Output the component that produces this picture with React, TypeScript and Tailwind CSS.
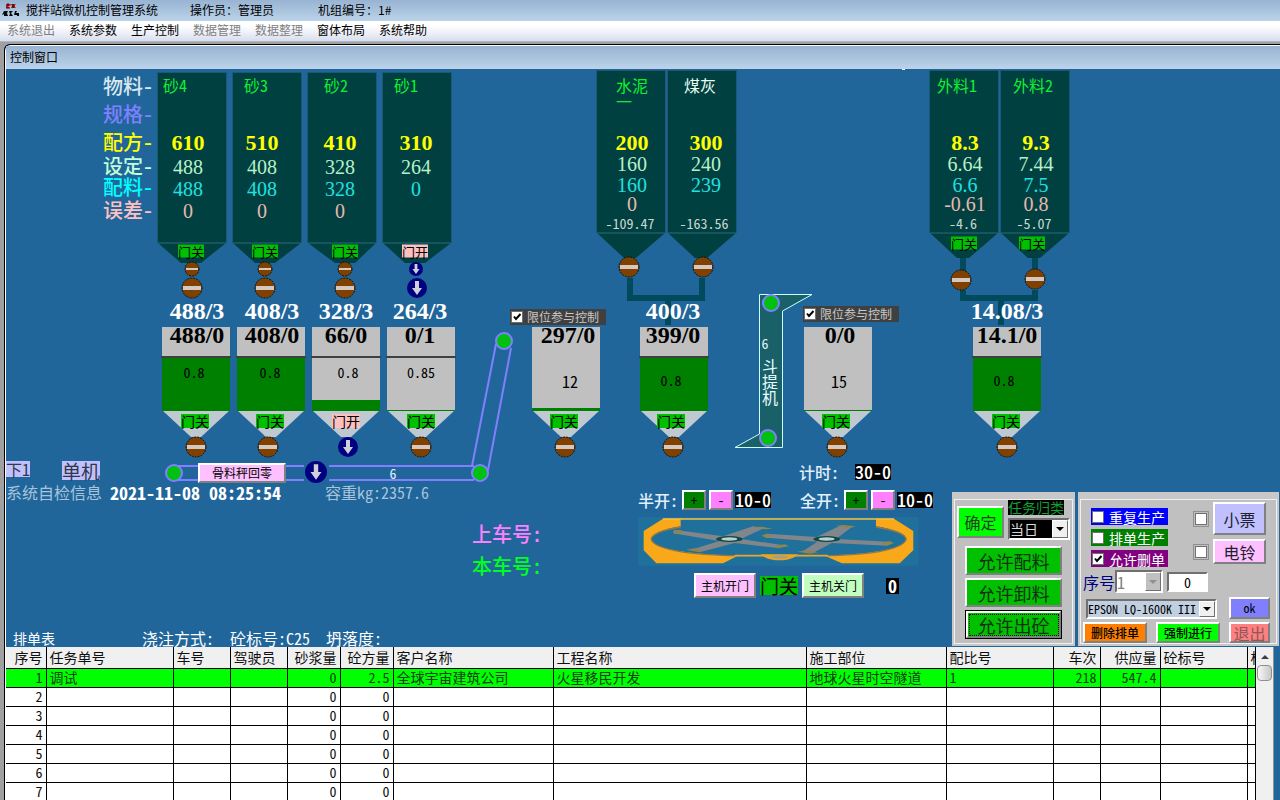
import type { ReactNode } from 'react';
import clsx from 'clsx';

type Gate = 'open' | 'closed';

interface Silo {
  x: number;
  top: number;
  bottom: number;
  textX: number;
  rows: number[];
  name: string;
  nameX: number;
  nameClass: string;
  recipe: string;
  target: string;
  actual: string;
  error?: string;
  stock?: string;
  gate?: Gate;
  gateX?: number;
}

interface Hopper {
  x: number;
  textX: number;
  target?: string;
  actual: string;
  factor: string;
  factorX: number;
  factorY: number;
  factorClass: string;
  level: number;
  marker: boolean;
  gate: Gate;
  gateX: number;
  valveX: number;
}

// The plant drawing uses frame coordinates, the canvas starts inside the frame
const ORIGIN_X = 6;
const ORIGIN_Y = 69;

const SAND_ROWS = [143, 167, 189, 211, 224];
const POWDER_ROWS = [143, 164, 185, 204, 224];

const silos: Silo[] = [
  { x: 158, top: 73, bottom: 243, textX: 188, rows: SAND_ROWS, name: '砂4', nameX: 163, nameClass: 'text-[#10f030]', recipe: '610', target: '488', actual: '488', error: '0', gate: 'closed', gateX: 191 },
  { x: 233, top: 73, bottom: 243, textX: 262, rows: SAND_ROWS, name: '砂3', nameX: 244, nameClass: 'text-[#10f030]', recipe: '510', target: '408', actual: '408', error: '0', gate: 'closed', gateX: 265 },
  { x: 308, top: 73, bottom: 243, textX: 340, rows: SAND_ROWS, name: '砂2', nameX: 324, nameClass: 'text-[#10f030]', recipe: '410', target: '328', actual: '328', error: '0', gate: 'closed', gateX: 345 },
  { x: 383, top: 73, bottom: 243, textX: 416, rows: SAND_ROWS, name: '砂1', nameX: 394, nameClass: 'text-[#10f030]', recipe: '310', target: '264', actual: '0', gate: 'open', gateX: 415 },
  { x: 597, top: 71, bottom: 233, textX: 632, rows: POWDER_ROWS, name: '水泥一', nameX: 616, nameClass: 'text-[#10f030]', recipe: '200', target: '160', actual: '160', error: '0', stock: '-109.47' },
  { x: 668, top: 71, bottom: 233, textX: 706, rows: POWDER_ROWS, name: '煤灰', nameX: 684, nameClass: 'text-[#e8fff0]', recipe: '300', target: '240', actual: '239', stock: '-163.56' },
  { x: 930, top: 71, bottom: 233, textX: 965, rows: POWDER_ROWS, name: '外料1', nameX: 937, nameClass: 'text-[#10f030]', recipe: '8.3', target: '6.64', actual: '6.6', error: '-0.61', stock: '-4.6', gate: 'closed', gateX: 964 },
  { x: 1001, top: 71, bottom: 233, textX: 1036, rows: POWDER_ROWS, name: '外料2', nameX: 1013, nameClass: 'text-[#10f030]', recipe: '9.3', target: '7.44', actual: '7.5', error: '0.8', stock: '-5.07', gate: 'closed', gateX: 1032 },
];

const hoppers: Hopper[] = [
  { x: 162, textX: 197, target: '488/3', actual: '488/0', factor: '0.8', factorX: 194, factorY: 373, factorClass: 'text-sm', level: 358, marker: true, gate: 'closed', gateX: 195, valveX: 196 },
  { x: 237, textX: 272, target: '408/3', actual: '408/0', factor: '0.8', factorX: 270, factorY: 373, factorClass: 'text-sm', level: 358, marker: true, gate: 'closed', gateX: 270, valveX: 268 },
  { x: 312, textX: 346, target: '328/3', actual: '66/0', factor: '0.8', factorX: 348, factorY: 373, factorClass: 'text-sm', level: 400, marker: true, gate: 'open', gateX: 346, valveX: 348 },
  { x: 387, textX: 420, target: '264/3', actual: '0/1', factor: '0.85', factorX: 421, factorY: 373, factorClass: 'text-sm', level: 410, marker: true, gate: 'closed', gateX: 421, valveX: 421 },
  { x: 532, textX: 568, actual: '297/0', factor: '12', factorX: 570, factorY: 382, factorClass: 'text-base', level: 408, marker: false, gate: 'closed', gateX: 564, valveX: 565 },
  { x: 640, textX: 673, target: '400/3', actual: '399/0', factor: '0.8', factorX: 671, factorY: 381, factorClass: 'text-sm', level: 358, marker: true, gate: 'closed', gateX: 671, valveX: 673 },
  { x: 804, textX: 840, actual: '0/0', factor: '15', factorX: 839, factorY: 382, factorClass: 'text-base', level: 410, marker: false, gate: 'closed', gateX: 836, valveX: 837 },
  { x: 973, textX: 1007, target: '14.08/3', actual: '14.1/0', factor: '0.8', factorX: 1004, factorY: 381, factorClass: 'text-sm', level: 358, marker: true, gate: 'closed', gateX: 1006, valveX: 1007 },
];

const rowCaptions = [
  { text: '物料-', y: 87, className: 'text-[#d8e8f0]' },
  { text: '规格-', y: 115, className: 'text-[#8080ff]' },
  { text: '配方-', y: 143, className: 'text-[#ffff00]' },
  { text: '设定-', y: 167, className: 'text-[#c0ffd8]' },
  { text: '配料-', y: 188, className: 'text-[#00ffff]' },
  { text: '误差-', y: 211, className: 'text-[#ffc0c0]' },
];

const menu = [
  { text: '系统退出', disabled: true },
  { text: '系统参数', disabled: false },
  { text: '生产控制', disabled: false },
  { text: '数据管理', disabled: true },
  { text: '数据整理', disabled: true },
  { text: '窗体布局', disabled: false },
  { text: '系统帮助', disabled: false },
];

const columns = [
  { title: '序号', width: 'w-[40px]', right: true },
  { title: '任务单号', width: 'w-[127px]', right: false },
  { title: '车号', width: 'w-[57px]', right: false },
  { title: '驾驶员', width: 'w-[57px]', right: false },
  { title: '砂浆量', width: 'w-[53px]', right: true },
  { title: '砼方量', width: 'w-[53px]', right: true },
  { title: '客户名称', width: 'w-[160px]', right: false },
  { title: '工程名称', width: 'w-[253px]', right: false },
  { title: '施工部位', width: 'w-[140px]', right: false },
  { title: '配比号', width: 'w-[107px]', right: false },
  { title: '车次', width: 'w-[47px]', right: true },
  { title: '供应量', width: 'w-[60px]', right: true },
  { title: '砼标号', width: 'w-[87px]', right: false },
  { title: '标', width: '', right: false },
];

const orders = [
  ['1', '调试', '', '', '0', '2.5', '全球宇宙建筑公司', '火星移民开发', '地球火星时空隧道', '1', '218', '547.4', '', ''],
  ...['2', '3', '4', '5', '6', '7'].map((n) => [n, '', '', '', '0', '0', '', '', '', '', '', '', '', '']),
];

const bevel = 'border-2 border-t-white border-l-white border-r-[#808080] border-b-[#808080]';
const sunken = 'border-2 border-t-[#707070] border-l-[#707070] border-r-white border-b-white';
const serif = "font-['Liberation_Serif',serif]";

function at(x: number, y: number) {
  return { left: x - ORIGIN_X, top: y - ORIGIN_Y };
}

/* Text centred on a point of the drawing */
function Mark({ x, y, className, children }: { x: number; y: number; className?: string; children: ReactNode }) {
  return (
    <span
      style={at(x, y)}
      className={clsx('absolute -translate-x-1/2 -translate-y-1/2 leading-none whitespace-nowrap', className)}
    >
      {children}
    </span>
  );
}

/* Item whose top left corner sits on a point of the drawing */
function Place({ x, y, className, children }: { x: number; y: number; className?: string; children: ReactNode }) {
  return (
    <div style={at(x, y)} className={clsx('absolute whitespace-nowrap', className)}>
      {children}
    </div>
  );
}

function GateTag({ gate, className }: { gate: Gate; className?: string }) {
  return (
    <span className={clsx('block leading-none text-black', gate === 'open' ? 'bg-[#ffc0c0]' : 'bg-[#00c000]', className)}>
      {gate === 'open' ? '门开' : '门关'}
    </span>
  );
}

function Valve({ x, y, r = 10, open = false }: { x: number; y: number; r?: number; open?: boolean }) {
  if (open) {
    const k = r / 10;
    return (
      <g transform={`translate(${x} ${y}) scale(${k})`}>
        <circle r={10} fill="#000080" />
        <path d="M-2 -7h4v7h3l-5 7l-5 -7h3z" fill="#d0d0d8" />
      </g>
    );
  }
  return (
    <g transform={`translate(${x} ${y})`}>
      <circle r={r} fill="#804000" stroke="#101010" strokeDasharray="2 1" />
      <rect x={-r + 1} y={r > 8 ? -2 : -1} width={2 * r - 2} height={r > 8 ? 4 : 2} fill="#d4c8c0" />
    </g>
  );
}

function Pulley({ x, y }: { x: number; y: number }) {
  return <circle cx={x} cy={y} r={8} fill="#00c010" stroke="#8080ff" strokeWidth={2} />;
}

function PlantDrawing() {
  return (
    <svg className="absolute top-0 left-0" width={1274} height={577} viewBox="6 69 1274 577" aria-hidden="true">
      {silos.map((s) => {
        const half = s.bottom === 243 ? 10 : 6;
        const tip = s.bottom + (s.bottom === 243 ? 20 : 25);
        const mid = s.bottom === 243 ? s.gateX! : s.x + 33;
        return (
          <g key={s.x} fill="#004040">
            <rect x={s.x - 1} y={s.top - 1} width={70} height={s.bottom - s.top + 1} fill="#1a5a78" />
            <rect x={s.x} y={s.top} width={68} height={s.bottom - s.top} />
            <polygon points={`${s.x},${s.bottom} ${s.x + 68},${s.bottom} ${mid + half},${tip} ${mid - half},${tip}`} />
            <line x1={s.x} x2={s.x + 68} y1={s.bottom} y2={s.bottom} stroke="#2a6a80" />
          </g>
        );
      })}

      {/* Pipes below the powder and admixture silos */}
      <g fill="none" stroke="#004a5c" strokeWidth={6}>
        <path d="M630 278V298H702V278" />
        <path d="M668 298V325" />
        <path d="M963 258V272M1035 258V272" />
        <path d="M963 290V298H1035V290" />
        <path d="M1001 298V325" />
      </g>

      {hoppers.map((h) => (
        <g key={h.x}>
          <rect x={h.x} y={327} width={68} height={84} fill="#c0c0c0" />
          <rect x={h.x} y={h.level} width={68} height={411 - h.level} fill="#008000" />
          {h.marker && <line x1={h.x - 1} x2={h.x + 69} y1={357} y2={357} stroke="#404040" strokeWidth={2} />}
          <polygon points={`${h.x + 1},411 ${h.x + 67},411 ${h.x + 39},437 ${h.x + 29},437`} fill="#c0c8d0" />
          <Valve x={h.valveX} y={447} open={h.gate === 'open'} />
        </g>
      ))}

      {[192, 265, 345].map((x) => (
        <g key={x}>
          <Valve x={x} y={269} r={7} />
          <Valve x={x} y={288} />
        </g>
      ))}
      <Valve x={416} y={269} r={7} open />
      <Valve x={417} y={288} open />
      <Valve x={629} y={267} />
      <Valve x={703} y={267} />
      <Valve x={961} y={280} />
      <Valve x={1035} y={279} />

      {/* Flat and inclined belts */}
      <g fill="none" stroke="#8080ff" strokeWidth={2}>
        <path d="M304 466H174a7 7 0 0 0 0 14H304M329 466H474M329 480H474" />
        <path d="M472 466L496 344M488 470L511 348" />
      </g>
      <Pulley x={174} y={473} />
      <Pulley x={480} y={473} />
      <Pulley x={504} y={341} />
      <Valve x={316} y={472} r={11} open />

      {/* Bucket elevator */}
      <path d="M759.5 294.5H812L782.5 311V447.5H735L759.5 434Z" fill="#1a6068" stroke="#c8ffff" />
      <Pulley x={771} y={303} />
      <Pulley x={768} y={438} />
      <path d="M902 69h3" stroke="#fff" strokeWidth={2} />

      <Mixer />
    </svg>
  );
}

function Mixer() {
  return (
    <g transform="translate(638 517) scale(0.3333)">
      <rect width={842} height={146} fill="#20709c" />
      <path
        d="M75 5H128V28C80 36 42 50 38 66C42 92 130 112 300 116L255 139H55L17 100V42Z"
        fill="#f8a818"
      />
      <path
        d="M768 5H714V28C764 36 802 50 806 66C802 92 720 112 560 116L612 139H785L826 100V42Z"
        fill="#f8a818"
      />
      <path d="M75 6H768" stroke="#f8c040" strokeWidth={4} />
      <path d="M128 30C80 38 42 50 40 66C44 92 130 114 300 116H560C720 114 800 92 804 66C802 50 764 38 714 30" fill="none" stroke="#907848" strokeWidth={4} />
      <path d="M290 116H570" stroke="#e8a428" strokeWidth={5} />
      <path d="M368 112H480C468 124 450 130 424 130C398 130 380 124 368 112Z" fill="#e8a428" />
      <ellipse cx={425} cy={120} rx={24} ry={5} fill="#a8a080" />
      <g fill="#80868a">
        <path d="M108 38L255 58L345 28L378 34L308 66L432 84L428 94L290 78L185 106L160 98L244 72L106 49Z" />
        <path d="M388 50L536 60L606 26L642 30L594 66L752 74L748 86L582 78L524 108L492 104L538 74L386 62Z" />
      </g>
      <g fill="#908450">
        <path d="M105 42l20 -4l14 6l-28 8z" />
        <path d="M345 30l28 -1l30 6l-24 2z" />
        <path d="M414 86l26 -4l14 6l-38 6z" />
        <path d="M145 98l24 -4l28 6l-22 4z" />
        <path d="M370 56l16 -6l18 5l-18 8z" />
        <path d="M595 26l22 -2l36 4l-20 6z" />
        <path d="M730 78l24 -6l14 6l-20 8z" />
        <path d="M478 104l24 -4l38 6l-24 4z" />
      </g>
      <ellipse cx={274} cy={66} rx={40} ry={9} fill="#104848" />
      <ellipse cx={274} cy={66} rx={24} ry={5} fill="#b8d0d0" />
      <ellipse cx={566} cy={66} rx={40} ry={9} fill="#104848" />
      <ellipse cx={566} cy={66} rx={24} ry={5} fill="#b8d0d0" />
    </g>
  );
}

function LimitCheck() {
  return (
    <label className="flex h-4 w-24 items-center gap-1 bg-[#404040] pl-px text-xs leading-none text-[#c8c8c8]">
      <Check defaultChecked />
      限位参与控制
    </label>
  );
}

function Check({ defaultChecked, label }: { defaultChecked?: boolean; label?: string }) {
  return (
    <span className="relative inline-flex size-3 shrink-0">
      <input
        type="checkbox"
        aria-label={label}
        defaultChecked={defaultChecked}
        className="peer size-3 appearance-none border border-[#707070] bg-white"
      />
      <svg viewBox="0 0 12 12" className="pointer-events-none absolute inset-0 hidden size-3 peer-checked:block">
        <path d="M3 5.5L5 8L9.5 3" fill="none" stroke="#000" strokeWidth={2} />
      </svg>
    </span>
  );
}

function PressButton({ className, children }: { className?: string; children: ReactNode }) {
  return (
    <button type="button" className={clsx('flex items-center justify-center leading-none whitespace-nowrap', bevel, className)}>
      {children}
    </button>
  );
}

function DropDown({ label, value, className, muted }: { label: string; value: string; className?: string; muted?: boolean }) {
  return (
    <div className={clsx('flex', sunken, className)}>
      <div className="relative flex flex-1">
        <select
          aria-label={label}
          defaultValue={value}
          disabled={muted}
          className="w-full appearance-none leading-none whitespace-nowrap outline-none"
        >
          <option>{value}</option>
        </select>
        <span
          className={clsx(
            'pointer-events-none absolute inset-y-0 right-0 flex w-4 items-center justify-center border border-t-white border-l-white border-r-[#707070] border-b-[#707070]',
            muted ? 'bg-[#c0c0c0]' : 'bg-[#f0f0f0]',
          )}
        >
          <svg viewBox="0 0 8 4" className="h-1 w-2">
            <path d="M0 0H8L4 4Z" fill={muted ? '#909090' : '#000'} />
          </svg>
        </span>
      </div>
    </div>
  );
}

function Readout({ className, children }: { className?: string; children: ReactNode }) {
  return <span className={clsx('block bg-black pb-0.5 text-lg leading-[14px] text-white', className)}>{children}</span>;
}

function GateStep({ label, value }: { label: string; value: string }) {
  return (
    <div className="flex items-center text-base leading-none font-medium text-[#e0f0ff]">
      <span className="w-11">{label}</span>
      <PressButton className="h-5 w-6 bg-[#008000] text-xs text-black">+</PressButton>
      <PressButton className="ml-[3px] h-5 w-6 bg-[#ff80ff] text-xs text-black">-</PressButton>
      <Readout className="ml-0.5">{value}</Readout>
    </div>
  );
}

function PlantLabels() {
  return (
    <div className="absolute inset-0">
      {rowCaptions.map((c) => (
        <Mark key={c.text} x={128} y={c.y} className={clsx('pb-0.5 text-xl font-medium', c.className)}>
          {c.text}
        </Mark>
      ))}

      {silos.map((s) => (
        <div key={s.x}>
          <Place x={s.nameX} y={77} className={clsx('w-10 text-base leading-4', s.nameClass)}>
            {s.name === '水泥一' ? (
              <>
                水泥
                <br />一
              </>
            ) : (
              s.name
            )}
          </Place>
          <Mark x={s.textX} y={s.rows[0]} className={clsx('text-[22px] font-bold text-[#ffff00]', serif)}>{s.recipe}</Mark>
          <Mark x={s.textX} y={s.rows[1]} className={clsx('text-xl text-[#b8f0c8]', serif)}>{s.target}</Mark>
          <Mark x={s.textX} y={s.rows[2]} className={clsx('text-xl text-[#20e0e0]', serif)}>{s.actual}</Mark>
          {s.error && <Mark x={s.textX} y={s.rows[3]} className={clsx('text-xl text-[#e8b8b0]', serif)}>{s.error}</Mark>}
          {s.stock && <Mark x={s.textX - 2} y={s.rows[4]} className="pb-0.5 text-sm text-[#c8d8d0]">{s.stock}</Mark>}
          {s.gate && (
            <Mark x={s.gateX!} y={s.bottom === 243 ? 251 : 243}>
              <GateTag gate={s.gate} className="text-[13px]" />
            </Mark>
          )}
        </div>
      ))}

      {hoppers.map((h) => (
        <div key={h.x}>
          {h.target && <Mark x={h.textX} y={311} className={clsx('text-2xl font-bold text-white', serif)}>{h.target}</Mark>}
          <Mark x={h.textX} y={335} className={clsx('text-2xl font-bold text-black', serif)}>{h.actual}</Mark>
          <Mark x={h.factorX} y={h.factorY} className={clsx('pb-0.5 text-black', h.factorClass)}>{h.factor}</Mark>
          <Mark x={h.gateX} y={421}>
            <GateTag gate={h.gate} className="text-sm leading-none" />
          </Mark>
        </div>
      ))}

      <Place x={510} y={309}><LimitCheck /></Place>
      <Place x={803} y={306}><LimitCheck /></Place>

      <Mark x={393} y={473} className="text-sm text-[#e0f0ff]">6</Mark>
      <Mark x={765} y={343} className="text-sm text-[#e0f0ff]">6</Mark>
      <Place x={762} y={357} className="w-4 text-base leading-4 text-[#e8ffff]">
        斗<br />提<br />机
      </Place>

      <Place x={198} y={463}>
        <PressButton className="h-5 w-[88px] bg-[#ffc0ff] text-xs text-black">骨料秤回零</PressButton>
      </Place>

      <Place x={6} y={461} className="bg-[#c0c0ff] text-base leading-4 text-[#303848]">下1</Place>
      <Place x={62} y={461} className="bg-[#c0c0ff] text-[19px] leading-[19px] text-[#303848]">单机</Place>
      <Place x={6} y={484} className="text-base leading-4 text-[#a8c4dc]">系统自检信息</Place>
      <Place x={110} y={484} className="text-lg leading-4 font-bold text-white">2021-11-08 08:25:54</Place>
      <Place x={325} y={484} className="text-base leading-4 text-[#a8c4dc]">容重kg:2357.6</Place>

      <Place x={472} y={524} className="text-xl leading-5 font-medium text-[#ff80ff]">上车号:</Place>
      <Place x={472} y={556} className="text-xl leading-5 font-medium text-[#00ff20]">本车号:</Place>

      <Place x={799} y={464} className="flex items-center text-base leading-4 font-medium text-[#e0f0ff]">
        <span className="w-14">计时:</span>
        <Readout>30-0</Readout>
      </Place>
      <Place x={638} y={490}><GateStep label="半开:" value="10-0" /></Place>
      <Place x={800} y={490}><GateStep label="全开:" value="10-0" /></Place>

      <Place x={694} y={573} className="flex items-center gap-1">
        <PressButton className="h-[25px] w-[62px] bg-[#ffc0ff] text-xs text-black">主机开门</PressButton>
        <GateTag gate="closed" className="text-[19px]" />
        <PressButton className="h-[25px] w-[62px] bg-[#c0ffc0] text-xs text-black">主机关门</PressButton>
        <Readout className="ml-[18px] px-0.5 font-bold">0</Readout>
      </Place>
    </div>
  );
}

function TaskPanel() {
  return (
    <div className="w-[123px] border-2 border-t-[7px] border-[#c8c8c8] bg-[#c0c0c0]">
      <div className="flex h-full flex-col border border-[#f0f0f0] px-[2px]">
        <div className="flex items-start gap-1">
          <PressButton className="mt-1.5 h-8 w-[47px] bg-[#00ff00] text-base text-[#204020]">确定</PressButton>
          <div className="flex flex-1 flex-col gap-[3px]">
            <span className="w-14 bg-black text-sm leading-[15px] text-[#10a030]">任务归类</span>
            <DropDown label="任务归类" value="当日" className="h-[22px] bg-black text-sm text-[#d8d8d8]" />
          </div>
        </div>
        <div className="mt-1.5 flex flex-col gap-[3px] px-2">
          <PressButton className="h-[29px] bg-[#00c000] text-lg text-[#103010]">允许配料</PressButton>
          <PressButton className="h-[29px] bg-[#00c000] text-lg text-[#103010]">允许卸料</PressButton>
          <div className="border border-black">
            <PressButton className="h-[27px] w-full bg-[#00c000] text-lg text-[#103010]">
              <span className="border border-dotted border-black px-2 leading-5">允许出砼</span>
            </PressButton>
          </div>
        </div>
      </div>
    </div>
  );
}

function PrintPanel() {
  const modes = [
    { text: '重复生产', className: 'bg-[#0000ff]', checked: false },
    { text: '排单生产', className: 'bg-[#008000]', checked: false },
    { text: '允许删单', className: 'bg-[#800080]', checked: true },
  ];

  return (
    <div className="w-[201px] border-2 border-t-[7px] border-[#c8c8c8] bg-[#c0c0c0]">
      <div className="flex flex-col border border-[#f0f0f0] px-[2px]">
        <div className="flex justify-between pt-[2px] pr-2 pl-2">
          <div className="flex flex-col gap-1 pt-[6px]">
            {modes.map((m) => (
              <label key={m.text} className={clsx('flex h-[17px] w-[77px] items-center gap-[5px] pl-px text-sm leading-none text-white', m.className)}>
                <Check defaultChecked={m.checked} />
                {m.text}
              </label>
            ))}
          </div>
          <div className="flex flex-col gap-1">
            <div className="flex items-center gap-1">
              <span className="flex border border-[#909090] p-px"><Check label="小票" /></span>
              <PressButton className="h-[33px] w-[53px] bg-[#c0c0ff] text-base text-[#202030]">小票</PressButton>
            </div>
            <div className="flex items-center gap-1">
              <span className="flex border border-[#909090] p-px"><Check label="电铃" /></span>
              <PressButton className="h-[25px] w-[53px] bg-[#ffc0ff] text-base text-[#202030]">电铃</PressButton>
            </div>
          </div>
        </div>
        <div className="mt-[3px] flex items-center">
          <span className="text-base leading-none text-[#000080]">序号</span>
          <DropDown label="序号" value="1" muted className="h-[23px] w-12 bg-white text-base text-[#808080]" />
          <input
            aria-label="数量"
            defaultValue="0"
            className={clsx('ml-1 h-5 w-[41px] bg-white text-center text-sm leading-none text-black outline-none', sunken)}
          />
        </div>
        <div className="mt-1 flex items-end justify-between pr-1 pl-[3px]">
          <DropDown label="打印机" value="EPSON LQ-1600K III" className="h-5 w-[131px] bg-[#c0d0e0] text-xs text-black" />
          <PressButton className="h-[22px] w-[41px] bg-[#8080ff] text-xs text-black">ok</PressButton>
        </div>
        <div className="mt-[3px] flex items-center justify-between pr-1">
          <PressButton className="h-[21px] w-16 bg-[#ff8000] text-xs font-medium text-black">删除排单</PressButton>
          <PressButton className="h-[21px] w-16 bg-[#00ff00] text-xs font-medium text-black">强制进行</PressButton>
          <PressButton className="h-[21px] w-[41px] bg-[#ff8080] text-base text-[#905858]">退出</PressButton>
        </div>
      </div>
    </div>
  );
}

function OrderTable() {
  return (
    <div className="flex min-h-0 flex-1 overflow-hidden pr-[6px]">
      <div className="min-w-0 flex-1 overflow-hidden bg-white">
        <table className="w-full table-fixed border-collapse text-sm leading-none text-[#101010]">
          <thead>
            <tr className="h-[21px] bg-[#f0f0f0]">
              {columns.map((c) => (
                <th
                  key={c.title}
                  className={clsx(
                    'overflow-hidden border-r border-b border-black px-[3px] pb-px font-normal whitespace-nowrap',
                    c.width,
                    c.right ? 'text-right' : 'text-left',
                  )}
                >
                  {c.title}
                </th>
              ))}
            </tr>
          </thead>
          <tbody>
            {orders.map((order, index) => (
              <tr key={order[0]} className={clsx('h-[19px]', index === 0 && 'bg-[#00ff00] text-[#104010]')}>
                {order.map((cell, i) => (
                  <td
                    key={columns[i].title}
                    className={clsx(
                      'overflow-hidden border-r border-b border-black px-[3px] pb-px whitespace-nowrap',
                      columns[i].right && 'text-right',
                    )}
                  >
                    {cell}
                  </td>
                ))}
              </tr>
            ))}
          </tbody>
        </table>
      </div>
      {/* Scroll bar */}
      <div className="flex w-[18px] flex-col items-center border-r border-[#909090] bg-[#f0f0f0]">
        <svg viewBox="0 0 8 4" className="mt-2 h-1 w-2">
          <path d="M0 4H8L4 0Z" fill="#404040" />
        </svg>
        <div className="mt-1.5 h-4 w-[15px] rounded-sm border border-[#909090] bg-linear-to-r from-[#f8f8f8] to-[#c8c8c8]" />
      </div>
    </div>
  );
}

export default function App() {
  return (
    <div className="flex h-screen flex-col overflow-hidden bg-[#a0a0a0] font-['Noto_Sans_CJK_SC',sans-serif] text-black">
      {/* Title bar */}
      <header className="flex h-[21px] shrink-0 items-center bg-linear-to-b from-[#98b4d2] to-[#bcd3ea] pb-0.5 pl-[2px] text-xs leading-none">
        <svg viewBox="0 0 17 14" className="mr-[7px] h-3.5 w-[17px]">
          <path d="M4 1h5l-1 2h-2l2 2h-4zM9 1h5l-2 2l2 2h-5l1 -2z" fill="#c01010" />
          <path d="M6 0v3M11 1v4M4 5h4M10 3h3" stroke="#301010" />
          <path d="M0 12l2 -4h4l-1 2l1 3h-4v-2zM7 8h4l-2 2l2 3h-4l1 -2zM12 12l1 -4h2l-1 2h3v3h-2v-1z" fill="#080808" />
        </svg>
        <h1>搅拌站微机控制管理系统</h1>
        <span className="ml-8">操作员：管理员</span>
        <span className="ml-11">机组编号：1#</span>
      </header>

      <nav className="flex h-[21px] shrink-0 items-center border-b border-[#b0b8c8] bg-linear-to-b from-white from-25% to-[#d8deee] pb-0.5">
        {menu.map((m) => (
          <button
            key={m.text}
            type="button"
            disabled={m.disabled}
            className={clsx('px-[7px] text-xs leading-none', m.disabled ? 'text-[#808080]' : 'text-black')}
          >
            {m.text}
          </button>
        ))}
      </nav>

      {/* Control window */}
      <main className="mt-[2px] ml-1 flex min-h-0 flex-1 flex-col rounded-tl-md border-t border-l border-black bg-[#21669a]">
        <div className="flex min-h-0 flex-1 flex-col rounded-tl-md border-t border-l border-white">
          <h2 className="flex h-[23px] shrink-0 items-center bg-linear-to-b from-[#98b4d2] to-[#bcd3ea] pb-px pl-1 text-xs leading-none">
            控制窗口
          </h2>

          <section className="relative flex h-[578px] shrink-0 items-end justify-between overflow-hidden [font-feature-settings:'hwid']">
            <PlantDrawing />
            <PlantLabels />
            <div className="relative flex items-end pb-px pl-[7px] text-white">
              <h3 className="w-[129px] text-sm leading-4">排单表</h3>
              <span className="w-[88px] text-base leading-4">浇注方式:</span>
              <span className="w-24 text-base leading-4">砼标号:C25</span>
              <span className="text-base leading-4">坍落度:</span>
            </div>
            <div className="relative flex items-stretch gap-[3px] pr-px pb-px">
              <TaskPanel />
              <PrintPanel />
            </div>
          </section>

          <div className="flex min-h-0 flex-1 flex-col [font-feature-settings:'hwid']">
            <OrderTable />
          </div>
        </div>
      </main>
    </div>
  );
}
